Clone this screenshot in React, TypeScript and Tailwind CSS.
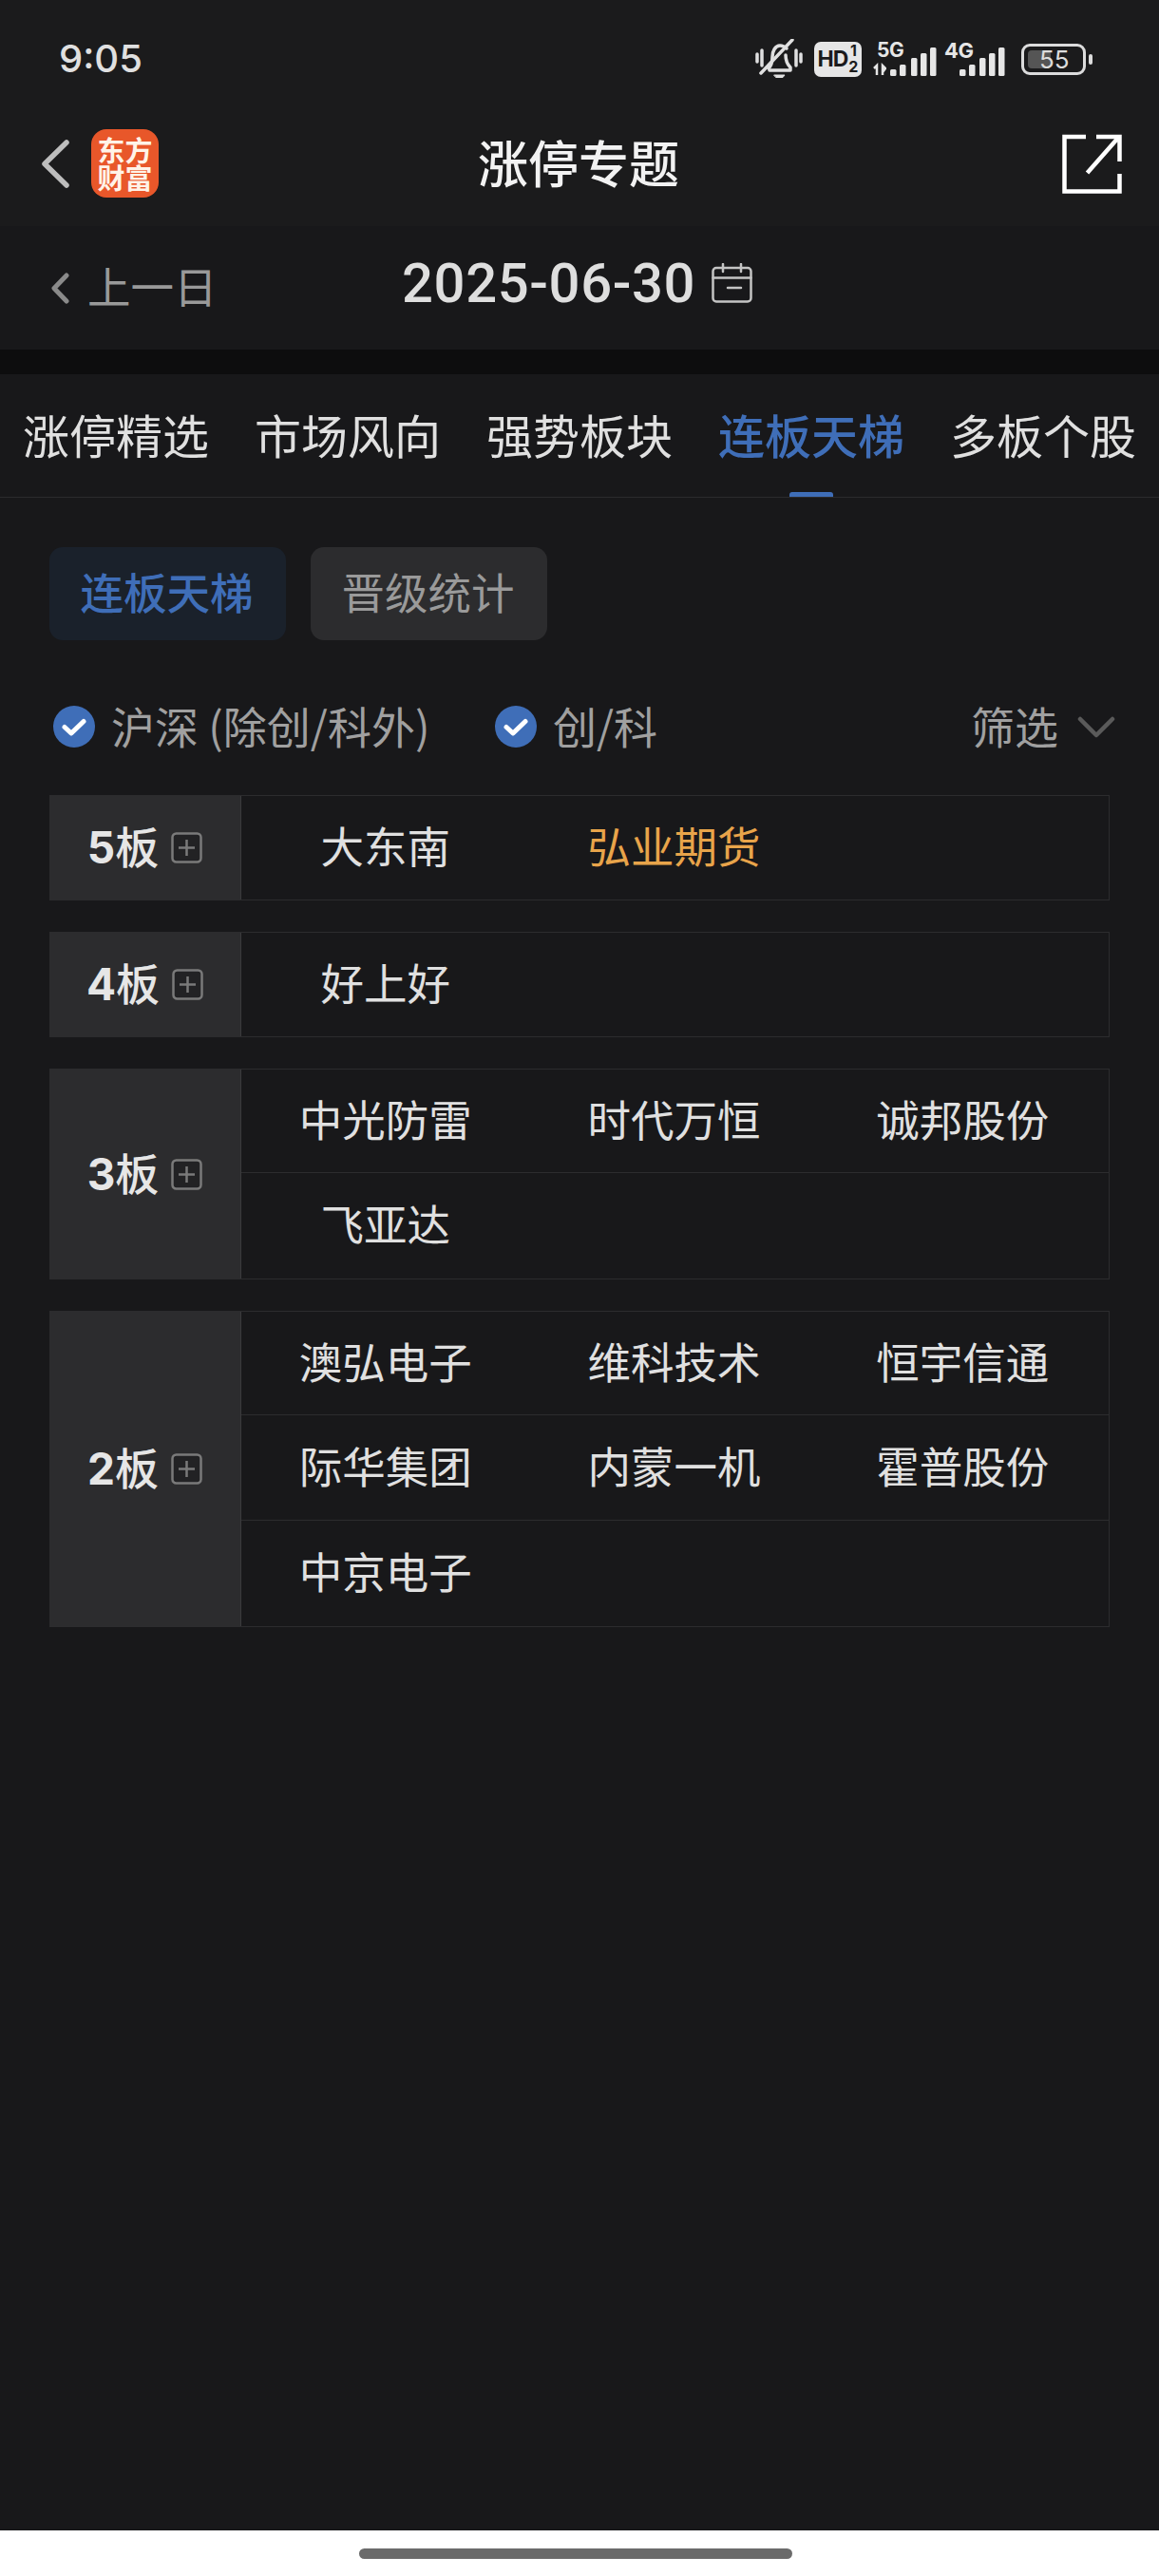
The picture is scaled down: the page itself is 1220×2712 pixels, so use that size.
import React from "react";

const CJK = "font-['Noto_Sans_CJK_SC','Noto_Sans',sans-serif]";

function SignalBars({ bars }: { bars: [number, number][] }) {
  return (
    <svg width="50" height="32" viewBox="0 0 50 32" className="absolute bottom-0 right-0">
      {bars.map(([x, h], i) => (
        <rect key={i} x={x} y={32 - h} width="6.500" height={h} rx="1.500" fill="#e6e6e6" />
      ))}
    </svg>
  );
}

function StatusIcons() {
  return (
    <div className="flex items-center">
      <svg width="50" height="42" viewBox="0 0 50 42" fill="none" stroke="#e0e0e0" strokeWidth="3.500" strokeLinecap="round" strokeLinejoin="round">
        <path d="M2 16v8M7 12v16M43 12v16M48 16v8" />
        <path d="M14 31c3-3 4-6 4-12 0-6 3-12 8-12 4 0 6 2 7 3" />
        <path d="M32 17c0 6 2 10 5 13v3H15" />
        <path d="M6 36 39 1" />
        <path d="M20 38h11l-2 2.500h-7z" fill="#e0e0e0" strokeWidth="1" />
      </svg>
      <div className="ml-[12px] flex h-[37px] w-[50px] items-center justify-center rounded-[7px] bg-[#e6e6e6] font-['Inter',sans-serif] font-bold text-[#1b1b1c]">
        <span className="text-[23px] leading-none tracking-[-1px]">HD</span>
        <span className="ml-[1px] flex flex-col items-center text-[16px] leading-[17px]">
          <span>1</span>
          <span>2</span>
        </span>
      </div>
      <div className="relative ml-[12px] h-[36px] w-[68px]">
        <span className="absolute left-[4px] top-[-3px] font-['Inter',sans-serif] text-[21px] font-bold leading-[24px] tracking-[-0.5px] text-[#e6e6e6]">5G</span>
        <svg width="14" height="14" viewBox="0 0 14 14" className="absolute bottom-[0px] left-0">
          <path d="M1 6 4 3 4 13M10 13V3l3 3-3 4" fill="none" stroke="#e6e6e6" strokeWidth="2.500" />
        </svg>
        <SignalBars bars={[[0, 7], [10, 12], [22, 19], [32, 24], [42, 30]]} />
      </div>
      <div className="relative ml-[7px] h-[36px] w-[65px]">
        <span className="absolute left-0 top-[-3px] font-['Inter',sans-serif] text-[22px] font-bold leading-[24px] tracking-[-0.5px] text-[#e6e6e6]">4G</span>
        <SignalBars bars={[[1, 7], [11, 12], [22, 19], [32, 24], [42, 30]]} />
      </div>
      <div className="relative ml-[16px] flex h-[33px] w-[68px] items-center rounded-[9px] border-[3px] border-[#dcdcdc] p-[4px]">
        <div className="h-full w-[24px] rounded-[4px] bg-[#555555]" />
        <span className="absolute left-[16px] top-[1px] font-['Inter',sans-serif] text-[26px] leading-[26px] text-[#dcdcdc]">55</span>
      </div>
      <div className="ml-[3px] h-[11px] w-[4px] rounded-[2px] bg-[#dcdcdc]" />
    </div>
  );
}

function Logo() {
  return (
    <div className={`ml-[23px] flex h-[72px] w-[71px] flex-col items-center justify-center rounded-[16px] bg-[#e8572a] text-[29px] font-bold leading-[29px] text-[#fff3e8] ${CJK}`}>
      <span>东方</span>
      <span>财富</span>
    </div>
  );
}

function NavBar() {
  return (
    <div className="relative mb-[6px] flex h-[120px] items-center justify-between pl-[44px] pr-[39px]">
      <div className="flex items-center">
        <svg width="29" height="51" viewBox="0 0 29 51" fill="none" stroke="#bdbdbd" strokeWidth="5.500" strokeLinecap="round" strokeLinejoin="round">
          <path d="M26 3 3 25.500 26 48" />
        </svg>
        <Logo />
      </div>
      <div className={`absolute left-0 right-0 top-0 flex h-full items-center justify-center pb-[4px] pr-[2px] text-[53px] font-medium leading-none text-[#f2f2f2] ${CJK}`}>
        涨停专题
      </div>
      <svg width="63" height="63" viewBox="0 0 63 63" fill="none" stroke="#ffffff" strokeWidth="4.500">
        <path d="M25 3H2.500v57.500h58V42M36 3h24.500v26M60 3 26.500 41" />
      </svg>
    </div>
  );
}

function DateBar() {
  return (
    <div className="flex h-[130px] items-center bg-[#18181a] pl-[54px]">
      <svg width="19" height="33" viewBox="0 0 19 33" fill="none" stroke="#8a8a8a" strokeWidth="5" strokeLinecap="round" strokeLinejoin="round">
        <path d="M16 3 3 16.500 16 30" />
      </svg>
      <span className={`ml-[19px] w-[134px] whitespace-nowrap pb-[4px] text-[45.500px] leading-none text-[#999999] ${CJK}`}>上一日</span>
      <div className="ml-[197px] flex items-center pb-[10px]">
        <span className="font-['Roboto',sans-serif] text-[58px] font-medium leading-none tracking-[0.6px] text-[#dedede]">2025-06-30</span>
        <svg className="ml-[17px]" width="43" height="42" viewBox="0 0 43 42" fill="none" stroke="#c4c4c4" strokeWidth="2.500" strokeLinecap="round">
          <rect x="1.500" y="5" width="40" height="35.500" rx="3.500" />
          <path d="M1.500 15.500h40M12 1v8M31 1v8M17 26h14" />
        </svg>
      </div>
    </div>
  );
}

function Tabs() {
  const tabs = ["涨停精选", "市场风向", "强势板块", "连板天梯", "多板个股"];
  return (
    <div className="mt-[26px] flex h-[130px] items-center gap-[48px] overflow-hidden border-b border-[#2c2c2e] bg-[#18181a] pl-[24px]">
      {tabs.map((t) => (
        <div
          key={t}
          className={`relative flex h-full shrink-0 items-center whitespace-nowrap pb-[5px] text-[49px] leading-none ${CJK} ${t === "连板天梯" ? "font-medium text-[#3f6eb8]" : "text-[#e0e0e0]"}`}
        >
          {t}
          {t === "连板天梯" && (
            <span className="absolute bottom-[-1px] left-[75px] h-[6px] w-[46px] rounded-t-[3px] bg-[#3f6eb8]" />
          )}
        </div>
      ))}
    </div>
  );
}

function SubTabs() {
  return (
    <div className={`ml-[52px] mt-[52px] flex gap-[26px] text-[45.500px] leading-none ${CJK}`}>
      <div className="flex h-[98px] w-[249px] items-center justify-center rounded-[14px] bg-[#1a212b] pb-[5px] pr-[2px] font-medium text-[#3f6eb8]">连板天梯</div>
      <div className="flex h-[98px] w-[249px] items-center justify-center rounded-[14px] bg-[#2c2c2e] pb-[5px] pr-[2px] text-[#9a9a9a]">晋级统计</div>
    </div>
  );
}

function Check() {
  return (
    <svg width="44" height="44" viewBox="0 0 44 44" className="shrink-0">
      <circle cx="22" cy="22" r="22" fill="#3f6eb8" />
      <path d="M12 22.500 19 29 32 16.500" fill="none" stroke="#ffffff" strokeWidth="5" strokeLinecap="round" strokeLinejoin="round" />
    </svg>
  );
}

function FilterRow() {
  return (
    <div className={`ml-[56px] mr-[46px] mt-[69px] flex h-[44px] items-center text-[46px] leading-none text-[#a0a0a0] ${CJK}`}>
      <Check />
      <span className="ml-[17px] w-[404px] whitespace-nowrap pb-[5px]">沪深 (除创/科外)</span>
      <Check />
      <span className="ml-[17px] whitespace-nowrap pb-[5px]">创/科</span>
      <span className="ml-auto whitespace-nowrap pb-[5px]">筛选</span>
      <svg className="ml-[20px]" width="40" height="23" viewBox="0 0 40 23" fill="none" stroke="#5a5a5a" strokeWidth="4.500" strokeLinecap="round" strokeLinejoin="round">
        <path d="M3 3 20 20 37 3" />
      </svg>
    </div>
  );
}

type Row = { label: string; lines: string[][] };

const rows: Row[] = [
  { label: "5", lines: [["大东南", "弘业期货", ""]] },
  { label: "4", lines: [["好上好", "", ""]] },
  { label: "3", lines: [["中光防雷", "时代万恒", "诚邦股份"], ["飞亚达", "", ""]] },
  { label: "2", lines: [["澳弘电子", "维科技术", "恒宇信通"], ["际华集团", "内蒙一机", "霍普股份"], ["中京电子", "", ""]] },
];

function PlusBox() {
  return (
    <svg className="ml-[13px]" width="33" height="33" viewBox="0 0 33 33" fill="none" stroke="#7a7a7a" strokeWidth="2.500">
      <rect x="1.500" y="1.500" width="30" height="30" rx="4" fill="#222224" />
      <path d="M16.500 8v17M8 16.500h17" />
    </svg>
  );
}

function Ladder() {
  return (
    <div className={`mx-[52px] mt-[50px] flex flex-col gap-[33px] ${CJK}`}>
      {rows.map((r) => (
        <div key={r.label} className="flex border border-[#2c2c2e]">
          <div className="flex w-[201px] shrink-0 items-center justify-center border-r border-[#3a3a3c] bg-[#2c2c2e] pr-[1px]">
            <span className="pb-[4px] text-[46px] font-medium leading-none text-[#e6e6e6]">
              <span className="font-['Inter',sans-serif] font-bold">{r.label}</span>板
            </span>
            <PlusBox />
          </div>
          <div className="flex flex-1 flex-col divide-y divide-[#2c2c2e]">
            {r.lines.map((line, i) => (
              <div key={i} className="grid h-[111px] grid-cols-3 items-center pb-[5px] pr-[2px] text-center text-[45.500px] leading-none text-[#e0e0e0] first:h-[109px]">
                {line.map((name, j) => (
                  <span key={j} className={name === "弘业期货" ? "text-[#e8a44a]" : ""}>{name}</span>
                ))}
              </div>
            ))}
          </div>
        </div>
      ))}
    </div>
  );
}

export default function App() {
  return (
    <div className="flex h-[2712px] w-[1220px] flex-col overflow-hidden bg-[#0d0d0e]">
      <div className="bg-[#1b1b1c]">
        <div className="flex h-[112px] items-center justify-between pl-[62px] pr-[70px] pt-[12px]">
          <span className="font-['Inter',sans-serif] text-[40px] font-medium leading-none text-[#e0e0e0]">9:05</span>
          <StatusIcons />
        </div>
        <NavBar />
      </div>
      <DateBar />
      <div className="flex flex-1 flex-col bg-[#18181a]">
        <div className="bg-[#0d0d0e]">
          <Tabs />
        </div>
        <SubTabs />
        <FilterRow />
        <Ladder />
      </div>
      <div className="flex h-[48px] shrink-0 items-start justify-center bg-white pr-[8px] pt-[19px]">
        <div className="h-[11px] w-[456px] rounded-full bg-[#6b6b6b]" />
      </div>
    </div>
  );
}
